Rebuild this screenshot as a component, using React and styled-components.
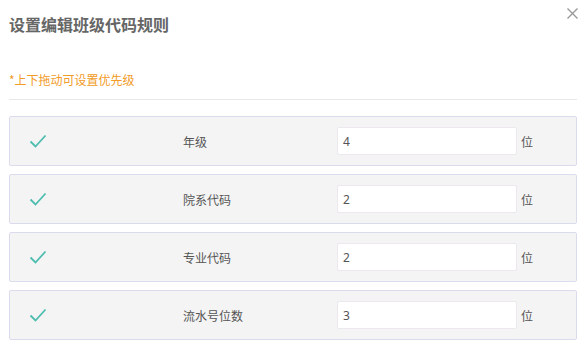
import styled, { createGlobalStyle } from "styled-components";

const GlobalStyle = createGlobalStyle`
  body {
    margin: 0;
    background: #fff;
    font-family: "Noto Sans CJK SC", "Noto Sans", sans-serif;
  }
`;

const rules = [
  { label: "年级", value: "4" },
  { label: "院系代码", value: "2" },
  { label: "专业代码", value: "2" },
  { label: "流水号位数", value: "3" },
];

const Check = () => (
  <svg width="18" height="14" viewBox="0 0 18 14">
    <path d="M1.5 7.5 L6.5 12.5 L16.5 1.5" fill="none" stroke="#4dbdaf" strokeWidth="1.8" />
  </svg>
);

const App = () => {
  return (
    <Dialog>
      <GlobalStyle />
      <Header>
        <Title>设置编辑班级代码规则</Title>
        <Close aria-label="close">
          <svg width="11" height="11" viewBox="0 0 11 11">
            <path d="M0.5 0.5 L10.5 10.5 M10.5 0.5 L0.5 10.5" stroke="#999" strokeWidth="1.4" />
          </svg>
        </Close>
      </Header>
      <Hint>*上下拖动可设置优先级</Hint>
      <Divider />
      <List>
        {rules.map((rule) => (
          <Row key={rule.label}>
            <Icon>
              <Check />
            </Icon>
            <Label>{rule.label}</Label>
            <Input defaultValue={rule.value} />
            <Unit>位</Unit>
          </Row>
        ))}
      </List>
    </Dialog>
  );
};

export default App;

const Dialog = styled.div`
  width: 586px;
  height: 356px;
  box-sizing: border-box;
  padding: 0 9px;
`;

const Header = styled.div`
  display: flex;
  justify-content: space-between;
  align-items: flex-start;
  padding-top: 12px;
`;

const Title = styled.h2`
  margin: 0;
  font-size: 16px;
  line-height: 24px;
  font-weight: bold;
  color: #666;
`;

const Close = styled.button`
  border: none;
  background: none;
  padding: 0;
  margin-top: -4px;
  margin-right: -1px;
  cursor: pointer;
  display: flex;
`;

const Hint = styled.p`
  margin: 35px 0 0;
  font-size: 12px;
  line-height: 18px;
  color: #f29b27;
`;

const Divider = styled.hr`
  margin: 10px 0 0;
  border: none;
  border-top: 1px solid #e8e8e8;
`;

const List = styled.div`
  display: flex;
  flex-direction: column;
  gap: 8px;
  margin-top: 16px;
`;

const Row = styled.div`
  display: grid;
  grid-template-columns: 154px 154px 180px auto;
  align-items: center;
  height: 50px;
  box-sizing: border-box;
  padding-left: 19px;
  background: #f4f4f4;
  border: 1px solid #dadcee;
  border-radius: 2px;
`;

const Icon = styled.div`
  display: flex;
  align-items: center;
`;

const Label = styled.span`
  font-size: 12px;
  color: #555;
`;

const Input = styled.input`
  width: 180px;
  height: 28px;
  box-sizing: border-box;
  border: 1px solid #ece8ee;
  border-radius: 2px;
  background: #fff;
  padding: 0 5px;
  font-family: "Noto Sans", sans-serif;
  font-size: 12px;
  color: #555;
  outline: none;
`;

const Unit = styled.span`
  margin-left: 4px;
  font-size: 12px;
  color: #555;
`;
